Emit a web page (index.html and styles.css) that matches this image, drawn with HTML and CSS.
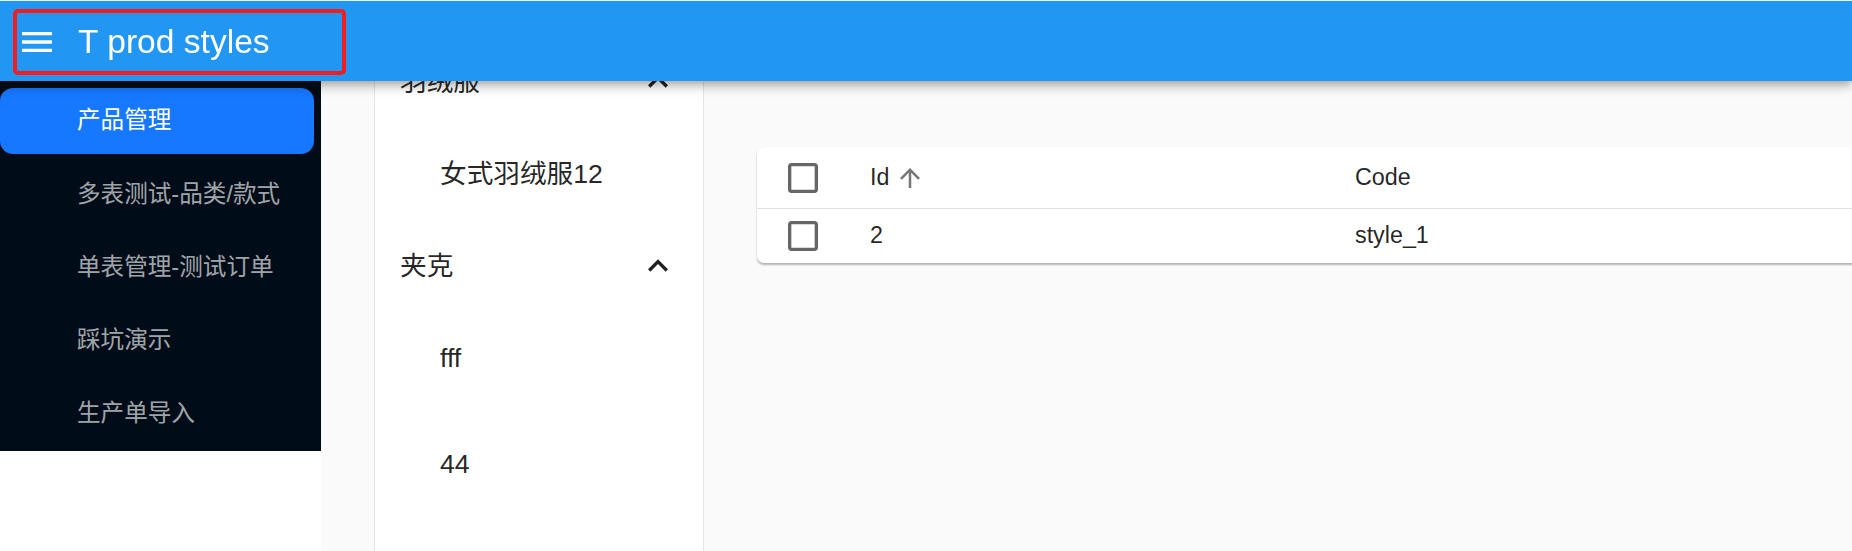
FILE: index.html
```html
<!DOCTYPE html>
<html lang="zh">
<head>
<meta charset="utf-8">
<title>T prod styles</title>
<link rel="stylesheet" href="styles.css">
</head>
<body>
<header class="appbar">
  <div class="brand">
    <svg class="menu-icon" viewBox="0 0 24 24"><path d="M3 18h18v-2H3v2zm0-5h18v-2H3v2zm0-7v2h18V6H3z"/></svg>
    <span class="title">T prod styles</span>
  </div>
</header>
<div class="layout">
  <aside class="sider">
    <div class="sider-spacer"></div>
    <nav class="menu">
      <div class="menu-item active">产品管理</div>
      <div class="menu-item">多表测试-品类/款式</div>
      <div class="menu-item">单表管理-测试订单</div>
      <div class="menu-item">踩坑演示</div>
      <div class="menu-item">生产单导入</div>
    </nav>
  </aside>
  <div class="content">
    <section class="panel">
      <div class="list-row cat"><span>羽绒服</span><svg class="chevron" viewBox="0 0 24 24"><path d="M12 8l-6 6 1.41 1.41L12 10.83l4.59 4.58L18 14z"/></svg></div>
      <div class="list-row sub">女式羽绒服12</div>
      <div class="list-row cat"><span>夹克</span><svg class="chevron" viewBox="0 0 24 24"><path d="M12 8l-6 6 1.41 1.41L12 10.83l4.59 4.58L18 14z"/></svg></div>
      <div class="list-row sub">fff</div>
      <div class="list-row sub spaced">44</div>
    </section>
    <main class="main">
      <div class="grid-card">
        <div class="grid-row grid-head">
          <div class="cell-check"><svg class="checkbox" viewBox="0 0 24 24"><path d="M19 5v14H5V5h14m0-2H5c-1.11 0-2 .9-2 2v14c0 1.1.89 2 2 2h14c1.1 0 2-.9 2-2V5c0-1.1-.9-2-2-2z"/></svg></div>
          <div class="cell cell-id"><span>Id</span><svg class="sort-icon" viewBox="0 0 24 24"><path d="M4 12l1.41 1.41L11 7.83V20h2V7.83l5.58 5.59L20 12l-8-8-8 8z"/></svg></div>
          <div class="cell cell-code">Code</div>
        </div>
        <div class="grid-row">
          <div class="cell-check"><svg class="checkbox" viewBox="0 0 24 24"><path d="M19 5v14H5V5h14m0-2H5c-1.11 0-2 .9-2 2v14c0 1.1.89 2 2 2h14c1.1 0 2-.9 2-2V5c0-1.1-.9-2-2-2z"/></svg></div>
          <div class="cell cell-id">2</div>
          <div class="cell cell-code">style_1</div>
        </div>
      </div>
    </main>
  </div>
</div>
</body>
</html>
```

FILE: styles.css
```css
html, body {
  margin: 0;
  height: 100%;
}

body {
  font-family: "Liberation Sans", "Noto Sans CJK SC", sans-serif;
  background: #fff;
  overflow: hidden;
}

.appbar {
  position: fixed;
  top: 0;
  left: 0;
  right: 0;
  height: 80px;
  border-top: 1px solid #eef2f6;
  background: #2196f3;
  z-index: 10;
  display: flex;
  align-items: center;
  padding-left: 13px;
  box-shadow: 0 3px 7px -2px rgba(0, 0, 0, 0.2), 0 7px 8px 0 rgba(0, 0, 0, 0.14), 0 2px 17px 0 rgba(0, 0, 0, 0.12);
}

.brand {
  box-sizing: border-box;
  width: 333px;
  height: 66px;
  margin-top: 2px;
  border: 4px solid #f41c1c;
  border-radius: 5px;
  display: flex;
  align-items: center;
}

.menu-icon {
  width: 40px;
  height: 40px;
  fill: #fff;
  flex: none;
}

.title {
  margin-left: 21px;
  font-size: 33.6px;
  line-height: 1;
  color: #fff;
}

.layout {
  display: flex;
  height: 100%;
}

.sider {
  width: 321px;
  flex: none;
  background: #fff;
  display: flex;
  flex-direction: column;
}

.sider-spacer {
  height: 81px;
  flex: none;
}

.menu {
  background: #000c17;
  display: flex;
  flex-direction: column;
  gap: 6.67px;
  padding: 6.67px 0 3.4px;
}

.menu-item {
  box-sizing: border-box;
  width: 314px;
  height: 66.67px;
  border-radius: 13px;
  padding-left: 77px;
  display: flex;
  align-items: center;
  font-size: 23.6px;
  line-height: 1;
  color: rgba(255, 255, 255, 0.65);
}

.menu-item.active {
  background: #1677ff;
  color: #fff;
}

.content {
  flex: 1;
  min-width: 0;
  display: flex;
  background: #fafafa;
  padding-left: 53px;
}

.panel {
  width: 330px;
  flex: none;
  box-sizing: border-box;
  background: #fff;
  border-left: 1px solid #e4e4e4;
  border-right: 1px solid #e4e4e4;
  padding-top: 36px;
}

.list-row {
  box-sizing: border-box;
  height: 92px;
  display: flex;
  align-items: center;
  font-size: 26.67px;
  line-height: 1;
  color: rgba(0, 0, 0, 0.87);
}

.list-row.cat {
  padding: 0 25px;
  justify-content: space-between;
}

.list-row.sub {
  padding-left: 65px;
}

.list-row.spaced {
  margin-top: 14px;
}

.chevron {
  width: 40px;
  height: 40px;
  fill: rgba(0, 0, 0, 0.87);
  flex: none;
}

.main {
  flex: 1;
  min-width: 0;
  overflow: hidden;
  padding: 147px 0 0 53px;
}

.grid-card {
  width: 1300px;
  background: #fff;
  border-radius: 7px;
  box-shadow: 0 2px 2px rgba(0, 0, 0, 0.28), 0 0 1px rgba(0, 0, 0, 0.06);
}

.grid-row {
  display: flex;
  align-items: center;
  height: 54px;
}

.grid-head {
  height: 61px;
  border-bottom: 1px solid #e0e0e0;
}

.cell-check {
  width: 92px;
  flex: none;
  display: flex;
  justify-content: center;
}

.checkbox {
  width: 40px;
  height: 40px;
  fill: rgba(0, 0, 0, 0.6);
}

.cell {
  box-sizing: border-box;
  padding-left: 21px;
  font-size: 23.3px;
  line-height: 1;
  color: rgba(0, 0, 0, 0.87);
}

.cell-id {
  width: 485px;
  flex: none;
  display: flex;
  align-items: center;
}

.sort-icon {
  width: 30px;
  height: 30px;
  margin-left: 5.5px;
  fill: rgba(0, 0, 0, 0.54);
}
```
